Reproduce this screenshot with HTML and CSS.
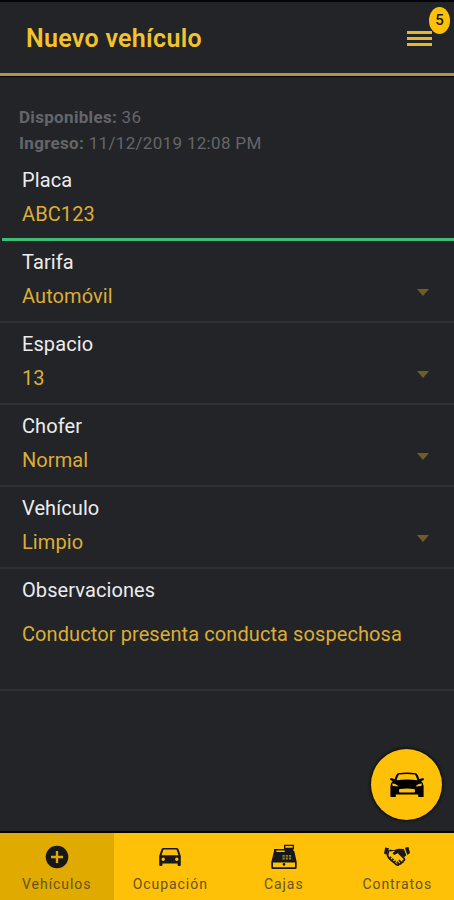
FILE: index.html
```html
<!DOCTYPE html>
<html lang="es">
<head>
    <meta charset="UTF-8">
    <meta name="viewport" content="width=device-width, initial-scale=1.0">
    <title>Nuevo vehículo</title>
    <link rel="stylesheet" href="styles.css">
</head>
<body>
    <header class="header">
        <h1>Nuevo vehículo</h1>
        <button class="menu-button" type="button" aria-label="Menú">
            <span class="bar"></span>
            <span class="bar"></span>
            <span class="bar"></span>
            <span class="badge">5</span>
        </button>
    </header>

    <main class="content">
        <div class="info">
            <p><b>Disponibles:</b> 36</p>
            <p><b>Ingreso:</b> 11/12/2019 12:08 PM</p>
        </div>

        <div class="field active">
            <span class="label">Placa</span>
            <span class="value">ABC123</span>
        </div>
        <div class="field">
            <span class="label">Tarifa</span>
            <span class="value select">Automóvil</span>
        </div>
        <div class="field">
            <span class="label">Espacio</span>
            <span class="value select">13</span>
        </div>
        <div class="field">
            <span class="label">Chofer</span>
            <span class="value select">Normal</span>
        </div>
        <div class="field">
            <span class="label">Vehículo</span>
            <span class="value select">Limpio</span>
        </div>
        <div class="field notes">
            <span class="label">Observaciones</span>
            <span class="value">Conductor presenta conducta sospechosa</span>
        </div>

        <button class="fab" type="button" aria-label="Ingresar">
            <svg viewBox="0 0 36 26" width="36" height="26">
                <path fill-rule="evenodd" d="M9 1.2Q18 -.4 27 1.2Q28.6 1.6 30.3 7.2Q32.8 5.9 35 6.4Q35.6 8.2 32.2 8.9Q34.6 11 34.6 14V24.5Q34.6 25 34 25H29.8Q29.2 25 29.2 24.4V22.5H6.8V24.4Q6.8 25 6.2 25H2Q1.4 25 1.4 24.5V14Q1.4 11 3.8 8.9Q.4 8.2 1 6.4Q3.2 5.9 5.7 7.2Q7.4 1.6 9 1.2ZM10 2.6Q8.6 4.5 7.6 8.3Q18 6.6 28.4 8.3Q27.4 4.5 26 2.6Q18 1.3 10 2.6ZM3.3 11.6Q3 13.4 4 14.1L9.3 14.5Q8 12 3.3 11.6ZM32.7 11.6Q28 12 26.7 14.5L32 14.1Q33 13.4 32.7 11.6ZM10.5 17Q9.4 19.5 10.6 20.5H25.4Q26.6 19.5 25.5 17Q18 16 10.5 17Z"/>
            </svg>
        </button>
    </main>

    <nav class="tabs">
        <a class="tab selected">
            <svg viewBox="0 0 26 26" width="26" height="26">
                <circle cx="13" cy="13" r="11.3"/>
                <path class="line" d="M13 7V19M7 13H19"/>
            </svg>
            <span>Vehículos</span>
        </a>
        <a class="tab">
            <svg viewBox="0 0 26 26" width="26" height="26">
                <path fill-rule="evenodd" d="M6.5 4H19.5Q21 4 21.5 5.3L23.8 12V21Q23.8 22 22.8 22H21.6Q20.6 22 20.6 21V19.6H5.4V21Q5.4 22 4.4 22H3.2Q2.2 22 2.2 21V12L4.5 5.3Q5 4 6.5 4ZM6.5 5.6L4.5 11.2H21.5L19.5 5.6ZM6.2 13.6A1.7 1.7 0 1 0 6.2 17A1.7 1.7 0 1 0 6.2 13.6ZM19.8 13.6A1.7 1.7 0 1 0 19.8 17A1.7 1.7 0 1 0 19.8 13.6Z"/>
            </svg>
            <span>Ocupación</span>
        </a>
        <a class="tab">
            <svg viewBox="0 0 26 26" width="26" height="26">
                <path fill-rule="evenodd" d="M13 .8H23V5H22.4V7H23.3L25.7 18V23.5Q25.7 25 24.2 25H1.8Q.3 25 .3 23.5V18L3 7.3V5H13ZM14.3 2.1V3.7H21.7V2.1ZM5.4 6.4V8.1H13.7V6.4ZM2 18.4V23.3H24V18.4Z"/>
                <path class="keys" d="M11.5 11.8H20.5M11.5 14.5H20.5"/>
                <circle cx="13" cy="20.4" r="1.3"/>
            </svg>
            <span>Cajas</span>
        </a>
        <a class="tab">
            <svg viewBox="0 0 26 26" width="26" height="26">
                <path d="M1.2 3.6L5 4.2L2.5 10.8L0 9.4ZM20.9 3.8L24.5 3L26 9.1L23.3 11ZM5.4 5.4L9.5 6.2L14.4 4.7L19.9 5.1L22.3 11.2L19.9 13.2L14.5 8.7L10.2 11L8.5 9.2L11.2 6.8L5.5 7.6Z"/>
                <path class="hand" d="M4.7 6.2L3.5 11.5L5.4 14.6L12.6 20.8Q14.1 21.7 14.9 20.1Q17 20.5 17.3 18.5Q19.4 18.7 19.3 16.8Q21.1 16.1 20.2 14.4L14.5 9"/>
                <path class="hand" d="M5.1 15L7.1 12.9M7.4 17L9.4 14.7M9.8 18.8L11.6 16.8M14.9 19.8L12.8 18M17.1 18.3L14.9 16.2"/>
            </svg>
            <span>Contratos</span>
        </a>
    </nav>
</body>
</html>
```

FILE: styles.css
```css
* {
    box-sizing: border-box;
}

body {
    font-family: Roboto, "Liberation Sans", sans-serif;
    margin: 0;
    height: 100vh;
    display: flex;
    flex-direction: column;
    overflow: hidden;
    background-color: #232427;
    border-top: 2px solid #050507;
}

button {
    border: none;
    padding: 0;
    cursor: pointer;
}

.header {
    display: flex;
    justify-content: space-between;
    align-items: center;
    height: 74px;
    padding: 0 22px 0 26px;
    border-bottom: 3px solid #b1934a;
    box-shadow: 0 1px 1px #08090b;
}

.header h1 {
    margin: 2px 0 0;
    font-size: 25px;
    font-weight: 600;
    letter-spacing: 0.3px;
    color: #f4c22c;
}

.menu-button {
    position: relative;
    display: flex;
    flex-direction: column;
    gap: 3px;
    width: 25px;
    margin-top: 2px;
    background: none;
}

.bar {
    height: 3px;
    background-color: #e5b92f;
}

/* contador sobre el menu */
.badge {
    position: absolute;
    top: -24px;
    left: 22px;
    width: 21px;
    height: 27px;
    border-radius: 50%;
    background-color: #ffc107;
    color: #17181a;
    font: 500 15px/26px Roboto, sans-serif;
    text-align: center;
}

.content {
    position: relative;
    flex: 1;
    padding-top: 28px;
}

.info {
    padding-left: 19px;
    font-size: 17px;
    line-height: 26px;
    letter-spacing: 0.32px;
    color: #65666a;
}

.info p {
    margin: 0;
}

.field {
    display: flex;
    flex-direction: column;
    height: 82px;
    padding: 8px 22px 0;
    border-bottom: 2px solid #303134;
    font-size: 20px;
    letter-spacing: 0.09px;
}

.field.active {
    height: 85px;
    padding-top: 11px;
    margin-left: 2px;
    padding-left: 20px;
    border-bottom: 3px solid #3cbf75;
}

.label {
    line-height: 26px;
    color: #ececee;
}

.value {
    margin-top: 8px;
    line-height: 26px;
    color: #dcae36;
}

.select {
    display: flex;
    justify-content: space-between;
    align-items: center;
}

.select::after {
    content: "";
    margin: 0 3px 8px 0;
    border: 6px solid transparent;
    border-top: 7px solid #705c25;
    border-bottom: none;
}

.notes {
    height: 122px;
}

.notes .value {
    margin-top: 18px;
}

.fab {
    position: absolute;
    right: 12px;
    bottom: 11px;
    display: flex;
    justify-content: center;
    align-items: center;
    width: 71px;
    height: 71px;
    border-radius: 50%;
    background-color: #ffc107;
    box-shadow: 0 0 3px 1px #0c0d10;
}

.tabs {
    display: flex;
    height: 69px;
    border-top: 2px solid #050507;
    background-color: #ffc107;
}

.tab {
    flex: 1;
    display: flex;
    flex-direction: column;
    align-items: center;
    padding-top: 11px;
    font-size: 14px;
    line-height: 18px;
    letter-spacing: 0.95px;
    color: #66531d;
}

.tab svg {
    margin-bottom: 5px;
    fill: #17181a;
}

.tab.selected {
    background-color: #e0aa00;
}

.line {
    stroke: #e0aa00;
    stroke-width: 2.4;
}

.keys {
    stroke: #94802d;
    stroke-width: 1.8;
    stroke-dasharray: 2.2 1;
}

.hand {
    fill: none;
    stroke: #17181a;
    stroke-width: 1.7;
}
```
